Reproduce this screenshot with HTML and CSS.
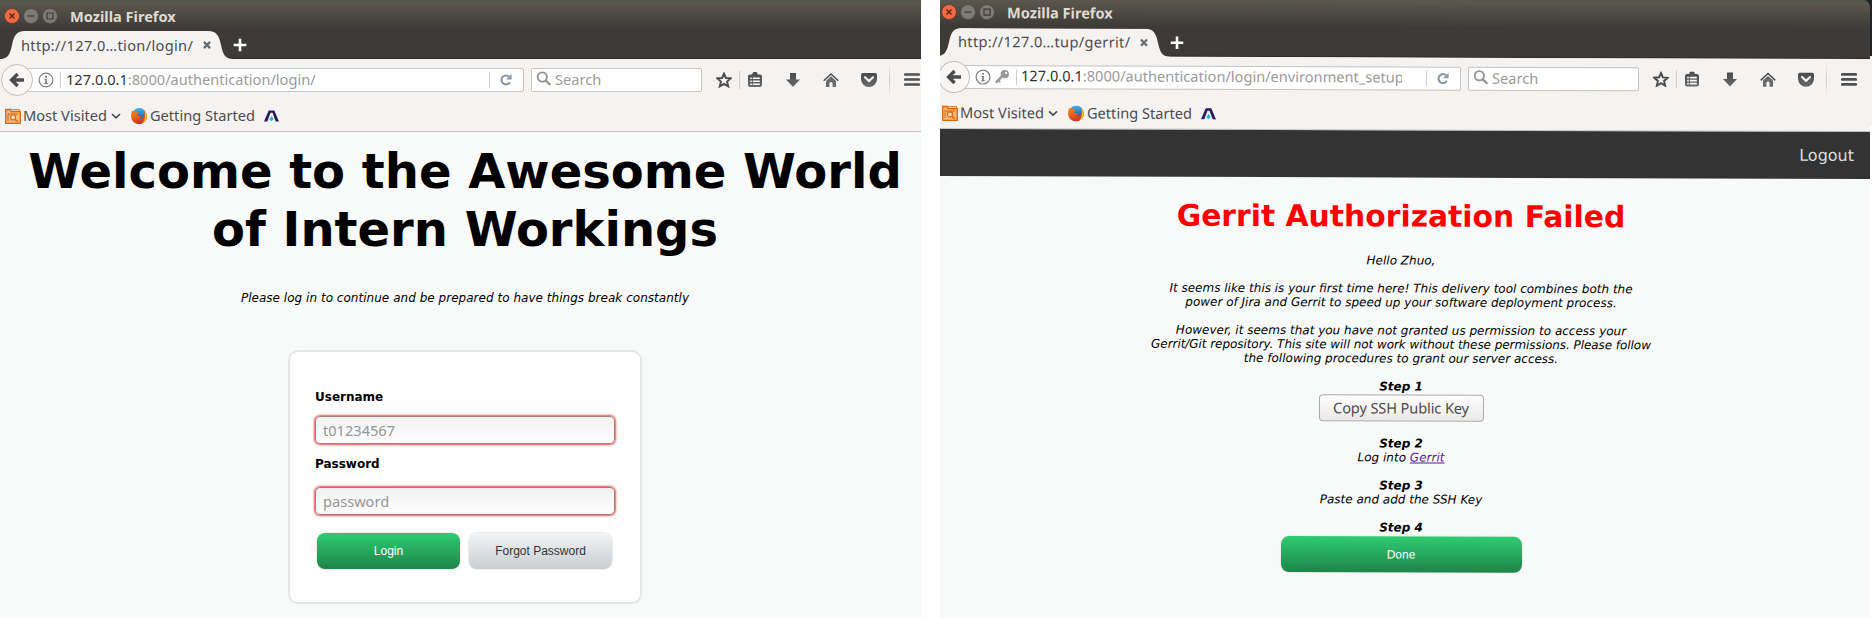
FILE: index.html
```html
<!DOCTYPE html>
<html lang="en">
<head>
<meta charset="utf-8">
<title>Intern Workings</title>
<link rel="stylesheet" href="styles.css">
</head>
<body>
<svg class="defs" aria-hidden="true">
  <defs>
    <linearGradient id="fox" x1="0" y1="0" x2="0.4" y2="1"><stop offset="0" stop-color="#f08a1c"/><stop offset="0.6" stop-color="#e8591a"/><stop offset="1" stop-color="#c9341a"/></linearGradient>
    <linearGradient id="globe" x1="0" y1="0" x2="0" y2="1"><stop offset="0" stop-color="#3fb4ee"/><stop offset="1" stop-color="#173f86"/></linearGradient>
    <linearGradient id="dark" x1="0" y1="0" x2="0" y2="1"><stop offset="0" stop-color="#4a4a4a"/><stop offset="1" stop-color="#6a6a6a"/></linearGradient>
  </defs>
  <symbol id="i-back" viewBox="0 0 16 16"><path d="M8.6 2 2.6 8l6 6M3.4 8H15" fill="none" stroke="#4c4c4c" stroke-width="3.4"/></symbol>
  <symbol id="i-info" viewBox="0 0 16 16"><circle cx="8" cy="8" r="6.9" fill="none" stroke="#808080" stroke-width="1.2"/><path d="M7.1 3.8h1.8v1.6H7.1zM6.5 6.8h2.3v4.3h.9v1H6.4v-1h.9V7.8h-.8z" fill="#707070"/></symbol>
  <symbol id="i-key" viewBox="0 0 16 16"><circle cx="10.8" cy="5" r="4.1" fill="#999"/><path d="M8.4 6.6 2 13.4" stroke="#999" stroke-width="2.6"/><path d="M4.6 11.4l1.7 1.7" stroke="#999" stroke-width="1.6"/><circle cx="12.1" cy="3.7" r="1.1" fill="#fff"/></symbol>
  <symbol id="i-reload" viewBox="0 0 14 14"><path d="M10.9 9.2A4.5 4.5 0 1 1 10 3.6" fill="none" stroke="#8d98a6" stroke-width="2.1"/><path d="M12.6 1v5.6H7z" fill="#8d98a6"/></symbol>
  <symbol id="i-search" viewBox="0 0 16 16"><circle cx="6.3" cy="6" r="4.6" fill="none" stroke="#949494" stroke-width="1.9"/><path d="M9.6 9.4 14.4 14" stroke="#949494" stroke-width="2.4"/></symbol>
  <symbol id="i-star" viewBox="0 0 16 16"><path d="M8 1.6 9.9 6l4.900.4-3.700 3.200 1.100 4.800L8 11.900l-4.200 2.500 1.100-4.800L1.200 6.400 6.100 6z" fill="none" stroke="#4c4c4c" stroke-width="1.900"/></symbol>
  <symbol id="i-list" viewBox="0 0 16 16"><path d="M5.2 2.600a2.600 2.600 0 0 1 5.600 0H13a2 2 0 0 1 2 2V13a2 2 0 0 1-2 2H3a2 2 0 0 1-2-2V4.600a2 2 0 0 1 2-2z" fill="url(#dark)"/><path d="M3.200 5.400h1.600v1.700H3.200zM5.800 5.400h7v1.700h-7zM3.200 8.400h1.600v1.700H3.200zM5.800 8.400h7v1.700h-7zM3.200 11.400h1.600v1.700H3.200zM5.800 11.400h7v1.700h-7z" fill="#f6f6f5"/></symbol>
  <symbol id="i-down" viewBox="0 0 16 16"><path d="M5 1h6v6.500h4L8 15 1 7.500h4z" fill="url(#dark)"/></symbol>
  <symbol id="i-home" viewBox="0 0 16 16"><path d="M.7 8.700 8 1.900l7.300 6.800" fill="none" stroke="#4c4c4c" stroke-width="1.500"/><path d="M3 8.900 8 4.300l5 4.600V15H9.600v-3.500a1.600 1.600 0 0 0-3.200 0V15H3z" fill="#6a6a6a"/></symbol>
  <symbol id="i-pocket" viewBox="0 0 16 16"><path d="M1.800 1h12.400A1.800 1.800 0 0 1 16 2.800V7A8 8 0 0 1 0 7V2.800A1.800 1.800 0 0 1 1.800 1z" fill="url(#dark)"/><path d="M4 5.200l4 3.900 4-3.900" fill="none" stroke="#f3f2f1" stroke-width="2.200" stroke-linecap="round" stroke-linejoin="round"/></symbol>
  <symbol id="i-menu" viewBox="0 0 16 16"><path d="M1.300 2.500h13.400M1.300 7.500h13.400M1.300 12.500h13.400" stroke="#505050" stroke-width="2.700" stroke-linecap="round"/></symbol>
  <symbol id="i-folder" viewBox="0 0 16 16"><path d="M.7 15.300V1.500h5.200v2.200h9.400v11.600z" fill="#f3b57c" stroke="#d8690f" stroke-width="1.300"/><path d="M3 13V6h10M7 1.800h7.500v1.500" fill="none" stroke="#d8690f" stroke-width="1"/><circle cx="8" cy="9.300" r="2.500" fill="#fbe3cc" stroke="#d8690f" stroke-width="1.200"/><path d="M9.800 11.100l2.700 2.600" stroke="#d8690f" stroke-width="1.400"/></symbol>
  <symbol id="i-firefox" viewBox="0 0 16 16"><circle cx="8.300" cy="7.400" r="7.300" fill="url(#globe)"/><path d="M1 2.600C1.800 3 2.500 3.300 3.400 3.200c1.600-.2 2.500.2 3.100 1 .9.100 1.400.300 1.300.8-.2.700-1.300 1-1.500 1.900 1 1.800 3.200.8 4.200 1.300-.5 1.300-1.600 1.900-3 2 2.600 1.200 5.200-.4 5.800-2.700.5-2-.1-3.700-1-4.800 3.100 1.400 4.400 4.500 3.500 7.700-1 3.500-4.200 5.600-7.800 5.600C3.600 16 .2 12.800.1 8.400 0 6.300.4 4.300 1 2.600z" fill="url(#fox)"/><path d="M13.500 2.800c2.400 2.300 2.900 5.200 2 7.700-.9 2.300-2.700 4-4.700 4.800 3-2.600 4.300-7.400 2.700-12.500z" fill="#fbc928"/></symbol>
  <symbol id="i-peak" viewBox="0 0 16 12"><path d="M0 11.500 4.700.5h5.600L15 11.500h-3.300L8.500 2.800h-2L3.300 11.500z" fill="#2a1a5e"/><path d="M7.500 6l2.200 3.300-2.200 2-2.200-2z" fill="#22b8d6"/></symbol>
  <symbol id="i-chev" viewBox="0 0 10 6"><path d="M1 1l4 3.800L9 1" fill="none" stroke="#4c4c4c" stroke-width="1.700"/></symbol>
  <symbol id="i-x" viewBox="0 0 8 8"><path d="M.9.900l6.200 6.200M7.100.9.900 7.100" stroke="#6b6b6b" stroke-width="2.300"/></symbol>
  <symbol id="i-plus" viewBox="0 0 14 14"><path d="M7 .7v12.600M.7 7h12.600" stroke="#fff" stroke-width="2.600"/></symbol>
  <symbol id="i-tab" viewBox="0 0 234 29"><path d="M0 29V28C8 28 10 23 12 14 14 5 16 0 25 0H208c9 0 11 5 13 14 2 9 4 14 12 14v1z" fill="#f4f3f2"/></symbol>
  <symbol id="i-wclose" viewBox="0 0 16 16"><circle cx="8" cy="8" r="7.500" fill="#ee6a43" stroke="#6a3a2a" stroke-width=".8"/><path d="M5.500 5.500l5 5M10.500 5.500l-5 5" stroke="#5b2412" stroke-width="1.400"/></symbol>
  <symbol id="i-wmin" viewBox="0 0 16 16"><circle cx="8" cy="8" r="7.500" fill="#7d7b74" stroke="#4a4943" stroke-width=".8"/><path d="M4.500 8h7" stroke="#3a3934" stroke-width="1.200"/></symbol>
  <symbol id="i-wmax" viewBox="0 0 16 16"><circle cx="8" cy="8" r="7.500" fill="#7d7b74" stroke="#4a4943" stroke-width=".8"/><path d="M5 5h6v6H5z" fill="none" stroke="#3a3934" stroke-width="1.200"/></symbol>
</svg>

<main class="shots">
  <section class="shot shot-login">
    <div class="window">
      <header class="titlebar">
        <svg class="wbtn"><use href="#i-wclose"/></svg><svg class="wbtn"><use href="#i-wmin"/></svg><svg class="wbtn"><use href="#i-wmax"/></svg>
        <span class="wtitle">Mozilla Firefox</span>
      </header>
      <div class="tabs">
        <div class="tab"><svg class="tab-shape"><use href="#i-tab"/></svg><span class="tab-text">http://127.0…tion/login/</span><svg class="tab-x"><use href="#i-x"/></svg></div>
        <svg class="plus"><use href="#i-plus"/></svg>
      </div>
      <div class="nav">
        <div class="back"><svg class="ic16"><use href="#i-back"/></svg></div>
        <div class="url">
          <svg class="ic16 info"><use href="#i-info"/></svg>
          <i class="sep"></i>
          <span class="address"><b>127.0.0.1</b>:8000/authentication/login/</span>
          <i class="sep"></i>
          <svg class="reload"><use href="#i-reload"/></svg>
        </div>
        <div class="search"><svg class="ic16"><use href="#i-search"/></svg><span>Search</span></div>
        <div class="tools">
          <svg class="ic16"><use href="#i-star"/></svg><i class="tsep"></i>
          <svg class="ic16"><use href="#i-list"/></svg><svg class="ic16"><use href="#i-down"/></svg><svg class="ic16"><use href="#i-home"/></svg><svg class="ic16"><use href="#i-pocket"/></svg>
          <i class="msep"></i><svg class="menu"><use href="#i-menu"/></svg>
        </div>
      </div>
      <div class="bookmarks">
        <svg class="ic16"><use href="#i-folder"/></svg><span class="bm-most">Most Visited</span><svg class="chev"><use href="#i-chev"/></svg>
        <svg class="ic16 ff"><use href="#i-firefox"/></svg><span class="bm-start">Getting Started</span><svg class="peak"><use href="#i-peak"/></svg>
      </div>
      <div class="page login-page">
        <h1>Welcome to the Awesome World<br>of Intern Workings</h1>
        <p class="lead">Please log in to continue and be prepared to have things break constantly</p>
        <form class="card">
          <label class="lab-user">Username</label>
          <div class="field"><span>t01234567</span></div>
          <label class="lab-pass">Password</label>
          <div class="field field-pass"><span>password</span></div>
          <div class="actions"><div class="btn green">Login</div><div class="btn grey">Forgot Password</div></div>
        </form>
      </div>
    </div>
  </section>

  <section class="shot shot-gerrit">
    <div class="window tilted">
      <header class="titlebar">
        <svg class="wbtn"><use href="#i-wclose"/></svg><svg class="wbtn"><use href="#i-wmin"/></svg><svg class="wbtn"><use href="#i-wmax"/></svg>
        <span class="wtitle">Mozilla Firefox</span>
      </header>
      <div class="tabs">
        <div class="tab"><svg class="tab-shape"><use href="#i-tab"/></svg><span class="tab-text">http://127.0…tup/gerrit/</span><svg class="tab-x"><use href="#i-x"/></svg></div>
        <svg class="plus"><use href="#i-plus"/></svg>
      </div>
      <div class="nav">
        <div class="back"><svg class="ic16"><use href="#i-back"/></svg></div>
        <div class="url">
          <svg class="ic16 info"><use href="#i-info"/></svg><svg class="ic16 key"><use href="#i-key"/></svg>
          <i class="sep"></i>
          <span class="address long"><b>127.0.0.1</b>:8000/authentication/login/environment_setup</span>
          <i class="sep"></i>
          <svg class="reload"><use href="#i-reload"/></svg>
        </div>
        <div class="search"><svg class="ic16"><use href="#i-search"/></svg><span>Search</span></div>
        <div class="tools">
          <svg class="ic16"><use href="#i-star"/></svg><i class="tsep"></i>
          <svg class="ic16"><use href="#i-list"/></svg><svg class="ic16"><use href="#i-down"/></svg><svg class="ic16"><use href="#i-home"/></svg><svg class="ic16"><use href="#i-pocket"/></svg>
          <i class="msep"></i><svg class="menu"><use href="#i-menu"/></svg>
        </div>
      </div>
      <div class="bookmarks">
        <svg class="ic16"><use href="#i-folder"/></svg><span class="bm-most">Most Visited</span><svg class="chev"><use href="#i-chev"/></svg>
        <svg class="ic16 ff"><use href="#i-firefox"/></svg><span class="bm-start">Getting Started</span><svg class="peak"><use href="#i-peak"/></svg>
      </div>
      <div class="page gerrit-page">
        <div class="appbar">Logout</div>
        <div class="guide">
          <h2>Gerrit Authorization Failed</h2>
          <p>Hello Zhuo,</p>
          <p>It seems like this is your first time here! This delivery tool combines both the<br>power of Jira and Gerrit to speed up your software deployment process.</p>
          <p>However, it seems that you have not granted us permission to access your<br><span class="tight">Gerrit/Git repository. This site will not work without these permissions. Please follow</span><br>the following procedures to grant our server access.</p>
          <div class="step"><strong>Step 1</strong><div class="copy">Copy SSH Public Key</div></div>
          <p><strong>Step 2</strong><br>Log into <a>Gerrit</a></p>
          <p><strong>Step 3</strong><br>Paste and add the SSH Key</p>
          <div class="step"><strong>Step 4</strong><div class="btn green done">Done</div></div>
        </div>
      </div>
    </div>
  </section>
</main>
</body>
</html>
```
FILE: styles.css
```css
* { box-sizing: border-box; }
body { margin: 0; background: #fff; overflow: hidden; }
svg { display: block; flex: none; }
.defs { position: absolute; width: 0; height: 0; }
i { display: block; flex: none; }

.shots { display: flex; gap: 19px; width: 1872px; height: 618px; }
.shot { height: 618px; overflow: hidden; flex: none; }
.shot-login { width: 921px; }
.shot-gerrit { width: 932px; background: linear-gradient(#1b2229 0 56px, #f4f3f2 56px 126px, #fff 126px); }
.window {
  width: 933px;
  height: 618px;
  display: flex;
  flex-direction: column;
  background: linear-gradient(#3c3b37 0 50px, #f4f3f2 50px);
  color: #4c4c4c;
  font: 14.6px/20px "Noto Sans", sans-serif;
  white-space: nowrap;
}
.tilted { margin-left: -3px; transform: skewY(0.186deg); transform-origin: 100% 0; height: 624px; border-top-right-radius: 7px; overflow: hidden; }

/* Window frame */
.titlebar { height: 31px; flex: none; display: flex; align-items: center; gap: 3px; padding: 0 0 0 4px; background: linear-gradient(#55564a 0 2px, #5b574c 3px, #3c3b37 29px); }
.wbtn { width: 16px; height: 16px; }
.wtitle { margin-left: 9px; font-weight: 700; font-size: 14.6px; color: #dfdbd2; }
.tilted .titlebar { padding-bottom: 2px; }
.tabs { height: 28px; flex: none; display: flex; background: #3c3b37; border-bottom: 1px solid #2b2a27; }
.tab { position: relative; width: 234px; height: 28px; display: flex; align-items: center; padding-left: 21px; }
.tab-shape { position: absolute; left: 0; top: 0; width: 234px; height: 29px; }
.tab-text { position: relative; width: 182px; letter-spacing: 0.33px; }
.tilted .tab-text { padding-bottom: 2px; }
.tab-x { position: relative; width: 8px; height: 8px; }
.plus { width: 14px; height: 14px; margin: 7px 0 0 -1px; }

/* Navigation bar */
.nav { height: 41px; flex: none; display: flex; align-items: center; padding-left: 1px; background: #f4f3f2; }
.back { width: 32px; height: 32px; flex: none; display: flex; align-items: center; justify-content: center; border: 1px solid #c4c1be; border-radius: 50%; background: #f8f7f6; z-index: 1; }
.url { width: 498px; height: 24px; flex: none; margin-left: -7px; display: flex; align-items: center; padding: 0 10px 0 11px; background: #fff; border: 1px solid #c6c3c0; border-radius: 2px; }
.info { width: 15px; height: 15px; }
.key { width: 16px; height: 16px; margin-left: 3px; }
.sep { width: 1px; height: 16px; background: #cfcfcf; margin-left: 6px; }
.address { flex: 1; margin-left: 5px; padding-bottom: 1px; line-height: 19px; color: #9b9b9b; overflow: hidden; }
.address b { font-weight: 400; color: #333; }
.address.long { margin-left: 4px; margin-right: 18px; padding-bottom: 2px; }
.reload { width: 14px; height: 14px; margin-left: 9px; }
.search { width: 171px; height: 24px; flex: none; margin-left: 7px; display: flex; align-items: center; gap: 3px; padding-left: 4px; padding-bottom: 1px; background: #fff; border: 1px solid #c6c3c0; border-radius: 2px; color: #9b9b9b; }
.tools { display: flex; align-items: center; margin-left: 14px; }
.ic16 { width: 16px; height: 16px; }
.tsep { width: 1px; height: 18px; background: #cfcdca; margin: 0 7px; }
.tools .ic16 + .ic16 { margin-left: 22px; }
.msep { width: 1px; height: 36px; background: linear-gradient(#f4f3f2, #cfcdca, #f4f3f2); margin: 0 14px 0 12px; }
.menu { width: 16px; height: 16px; }

/* Bookmarks bar */
.bookmarks { height: 32px; flex: none; display: flex; align-items: center; padding-left: 5px; border-bottom: 1px solid #c4c2bf; }
.bookmarks span { padding-bottom: 1px; }
.bm-most { margin-left: 2px; width: 88px; }
.chev { width: 10px; height: 6px; }
.ff { margin-left: 10px; }
.bm-start { margin-left: 3px; width: 114px; }
.peak { width: 16px; height: 12px; }

.page { flex: 1; background: #f8faf9; color: #000; font: 12px/14px "DejaVu Sans", sans-serif; }

/* Login page */
.login-page { width: 930px; display: flex; flex-direction: column; align-items: center; text-align: center; padding-top: 10px; }
h1 { margin: 0; font-size: 48px; line-height: 58px; font-weight: 700; }
.lead { margin: 33px 0 0; font-style: italic; line-height: 14px; letter-spacing: 0.03px; }
.card { width: 354px; height: 254px; margin: 45px 0 0; padding: 38px 23px 0 25px; text-align: left; background: #fff; border: 2px solid #e3e8e6; border-radius: 10px; flex: none; }
.card label { display: block; font-weight: 700; line-height: 14px; }
.field { width: 300px; height: 28px; padding: 3px 7px; margin: 12px 0 0; border: 1px solid #a87c7c; border-radius: 5px; background: linear-gradient(#f1f1f1, #fff); box-shadow: 0 0 2px 1px #ff5050; color: #969696; font: 14.6px/20px "Noto Sans", sans-serif; }
.lab-pass { margin-top: 13px; }
.field-pass { margin-top: 16px; }
.actions { display: flex; gap: 9px; margin: 18px 0 0 2px; }
.btn { width: 143px; height: 36px; border-radius: 8px; font: 12px/36px "Liberation Sans", sans-serif; text-align: center; box-shadow: 0 0 1px 1px #ececec; }
.green { background: linear-gradient(#2ecc71, #1e8449); color: #fff; }
.grey { background: linear-gradient(#f2f3f4, #caced1); color: #333; }

/* Gerrit page */
.appbar { height: 47px; padding-right: 16px; background: #333; color: #ddd; text-align: right; font: 16px/47px "DejaVu Sans", sans-serif; }
.guide { width: 928px; text-align: center; font-style: italic; padding-top: 21px; }
h2 { margin: 0 0 19px; font-size: 29.8px; line-height: 36px; font-style: normal; font-weight: 700; color: #f00; }
.guide p { margin: 0 0 14px; }
.tight { letter-spacing: -0.06px; }
.step { display: flex; flex-direction: column; align-items: center; }
.copy { width: 165px; height: 27px; margin: 1px 0 15px; border: 1px solid #aaa; border-radius: 4px; background: linear-gradient(#fdfdfd, #ebe9e8); color: #4c4c4c; font: 14.6px/25px "Noto Sans", sans-serif; letter-spacing: -0.12px; }
.guide a { color: #5b1a9a; text-decoration: underline; }
.done { width: 241px; margin-top: 2px; }
```
